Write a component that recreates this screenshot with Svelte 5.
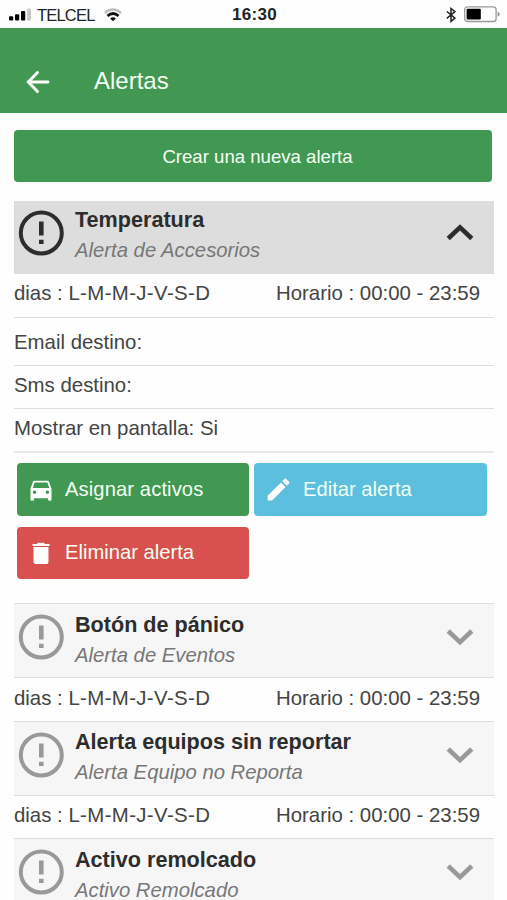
<script>
  const alerts = [
    { title: 'Temperatura', kind: 'Alerta de Accesorios', open: true },
    { title: 'Botón de pánico', kind: 'Alerta de Eventos', open: false },
    { title: 'Alerta equipos sin reportar', kind: 'Alerta Equipo no Reporta', open: false },
    { title: 'Activo remolcado', kind: 'Activo Remolcado', open: false }
  ];
</script>

<div class="screen">
  <div class="status">
    <div class="carrier">
      <svg class="signal" width="23" height="13" viewBox="0 0 23 13">
        <rect x="0" y="8.2" width="4.2" height="4.4" rx="1" />
        <rect x="6" y="6.2" width="4.2" height="6.4" rx="1" />
        <rect x="12" y="3" width="4.2" height="9.6" rx="1" />
        <rect x="18.2" y="0.4" width="3.8" height="12.2" rx="1" fill="#c8c8c8" />
      </svg>
      <span>TELCEL</span>
      <svg class="wifi" width="18" height="14" viewBox="0 0 18 14" fill="none">
        <path d="M1 5.1C5.6.2 12.4.2 17 5.1" stroke="#bdbdbd" stroke-width="2.5" />
        <path d="M3.5 8C7 4.8 11 4.8 14.5 8" stroke="#111" stroke-width="2.8" />
        <path d="M6.1 10.5C7.9 8.9 10.1 8.9 11.9 10.5L9 13.2Z" fill="#111" />
      </svg>
    </div>
    <div class="clock">16:30</div>
    <div class="power">
      <svg width="10" height="16" viewBox="0 0 10 16" fill="none" stroke="#222" stroke-width="1.5">
        <path d="M.8 4.5 9 11.2 5 14.4V1.5L9 4.6.8 11.4" />
      </svg>
      <svg width="36" height="17" viewBox="0 0 36 17">
        <rect x=".7" y=".9" width="31.4" height="14.6" rx="2.7" fill="#fff" stroke="#999" stroke-width="1.3" />
        <rect x="2.6" y="2.8" width="14.2" height="10.8" rx="1" />
        <path d="M33.6 5.6Q38 8.2 33.6 10.8Z" fill="#999" />
      </svg>
    </div>
  </div>

  <header>
    <svg width="24" height="24" viewBox="0 0 24 24" fill="none" stroke="#fff" stroke-width="2.9" stroke-linecap="round">
      <path d="M11.5 2.5 2.3 12l9.2 9.5M2.5 12H22" />
    </svg>
    <h1>Alertas</h1>
  </header>

  <main>
    <button class="create"><span>Crear una nueva alerta</span></button>

    {#each alerts as a}
      <section class:open={a.open}>
        <div class="head">
          <svg class="warn" width="46" height="46" viewBox="0 0 46 46">
            <circle cx="23.3" cy="23" r="20.5" fill="none" stroke="currentColor" stroke-width="4" />
            <path d="M21 11.5h4.6v14H21zM21 29.7h4.6V34H21z" fill="currentColor" />
          </svg>
          <div class="names">
            <strong>{a.title}</strong>
            <em>{a.kind}</em>
          </div>
          <svg class="chevron" width="28" height="18" viewBox="0 0 28 18" fill="none" stroke="currentColor" stroke-width="4.6">
            <path d={a.open ? 'M2.2 14.5 14 3.4 25.8 14.5' : 'M2.2 3 14 14.1 25.8 3'} />
          </svg>
        </div>
        <div class="row schedule"><span>dias : <span class="days">L-M-M-J-V-S-D</span></span><span class="hours">Horario : 00:00 - 23:59</span></div>
        {#if a.open}
          <div class="row email"><span>Email destino:</span></div>
          <div class="row"><span>Sms destino:</span></div>
          <div class="row last"><span>Mostrar en pantalla: Si</span></div>
          <div class="actions">
            <button class="assign">
              <svg width="28" height="28" viewBox="0 0 24 24"><path d="M18.92 5.01C18.72 4.42 18.16 4 17.5 4h-11c-.66 0-1.21.42-1.42 1.01L3 11v9.2c0 .55.45 1 1 1h1c.55 0 1-.45 1-1V19h12v1.2c0 .55.45 1 1 1h1c.55 0 1-.45 1-1V11zM6.5 15.5a1.5 1.5 0 1 1 0-3 1.5 1.5 0 0 1 0 3m11 0a1.5 1.5 0 1 1 0-3 1.5 1.5 0 0 1 0 3M5 10.2 6.5 5.6h11L19 10.2z" fill-rule="evenodd" /></svg>
              <span>Asignar activos</span>
            </button>
            <button class="edit">
              <svg width="29" height="29" viewBox="0 0 24 24"><path d="M3 17.25V21h3.75L17.81 9.94l-3.75-3.75zM20.71 7.04c.39-.39.39-1.02 0-1.41l-2.34-2.34a1 1 0 0 0-1.41 0l-1.83 1.83 3.75 3.75z" /></svg>
              <span>Editar alerta</span>
            </button>
            <button class="remove">
              <svg width="28" height="28" viewBox="0 0 24 24"><path d="M5.6 19.4c0 1.1.9 2 2 2h8.8c1.1 0 2-.9 2-2V6.8H5.6zM19.3 4.2h-3.8l-1-1h-5l-1 1H4.7V6h14.6z" /></svg>
              <span>Eliminar alerta</span>
            </button>
          </div>
        {/if}
      </section>
    {/each}
  </main>
</div>

<style>
  :global(body) { margin: 0; background: #fff; overflow: hidden; }
  * { box-sizing: border-box; }
  .screen {
    width: 507px;
    height: 900px;
    overflow: hidden;
    background: #fefefe;
    font-family: "Liberation Sans", Arial, sans-serif;
    color: #444;
  }
  .status {
    height: 28px;
    display: grid;
    grid-template-columns: 1fr auto 1fr;
    align-items: center;
    padding: 2px 7px 0 9px;
    color: #222;
  }
  .carrier { display: flex; align-items: center; font-size: 16.5px; }
  .carrier span { margin-left: 5px; letter-spacing: -.8px; }
  .signal, .wifi { position: relative; top: -.5px; }
  .wifi { margin-left: 9px; }
  .clock { font-size: 17px; font-weight: 700; letter-spacing: .3px; }
  .power { display: flex; justify-content: flex-end; align-items: center; gap: 8px; margin-top: -1px; }
  header {
    height: 85px;
    background: #429753;
    display: flex;
    align-items: center;
    padding: 20px 0 0 26px;
  }
  header svg { margin-top: 3px; }
  h1 { margin: 1px 0 0 44px; font-size: 24px; font-weight: 400; color: #f4fff4; }
  main { padding: 17px 13px 0 14px; }
  button {
    border: 0;
    border-radius: 4px;
    font-family: inherit;
    color: #f4fff4;
    display: flex;
    align-items: center;
    padding: 0;
  }
  .create {
    width: 478px;
    height: 52px;
    margin-bottom: 19px;
    padding: 1px 0 0 9px;
    justify-content: center;
    background: #409852;
    font-size: 18.6px;
  }
  .head {
    height: 75px;
    display: flex;
    align-items: flex-start;
    padding: 10px 20px 0 4px;
    background: #f6f6f6;
    border-top: 1px solid #ddd;
    border-bottom: 1px solid #ddd;
    color: #999;
  }
  .open .head { height: 73px; padding-top: 8px; background: #ddd; color: #2d2d2d; }
  .names { flex: 1; margin-left: 11px; margin-top: -4.6px; }
  strong, em { display: block; height: 30px; line-height: 30px; white-space: nowrap; }
  strong { font-size: 21.6px; color: #2d2d2d; }
  em { font-size: 20.3px; color: #777; }
  .chevron { margin-top: 14px; }
  .row {
    height: 43px;
    display: flex;
    align-items: center;
    justify-content: space-between;
    border-bottom: 1px solid #ddd;
    font-size: 20.4px;
    padding-bottom: 3px;
  }
  .schedule { padding-right: 14px; height: 42.5px; border-bottom: 0; }
  .days { letter-spacing: .37px; }
  .open .schedule { height: 44px; padding-bottom: 4px; border-bottom: 1px solid #ddd; }
  .row.email { height: 48px; padding-bottom: 0; padding-top: 1px; }
  .last { height: 44px; border-bottom: 2px solid #e8e8e8; }
  .actions {
    display: grid;
    grid-template-columns: 232px 233px;
    gap: 11px 5px;
    padding: 10px 3px 24.4px;
  }
  .actions button { height: 53px; padding-left: 10px; font-size: 20.2px; }
  .actions span { margin: -1px 0 0 10px; }
  .actions svg { fill: #fff; }
  .actions .assign { background: #409852; letter-spacing: .1px; }
  .actions .edit { background: #5cbfde; }
  .actions .remove { background: #d8514e; height: 52px; }
</style>
